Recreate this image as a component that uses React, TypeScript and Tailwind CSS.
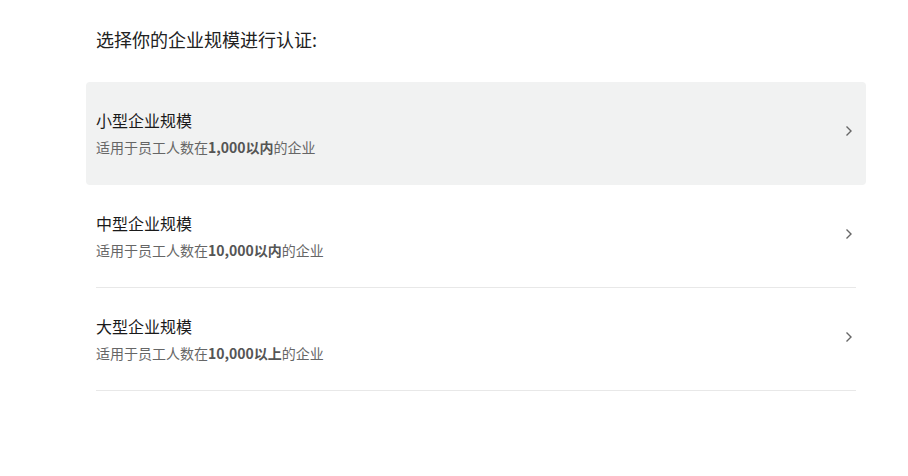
const rows = [
  { title: '小型企业规模', count: '1,000', tail: '以内', active: true },
  { title: '中型企业规模', count: '10,000', tail: '以内', active: false },
  { title: '大型企业规模', count: '10,000', tail: '以上', active: false },
]

function Chevron() {
  return (
    <svg width="8" height="12" viewBox="0 0 8 12" fill="none" className="shrink-0">
      <path d="M1.5 1.5 6 6l-4.5 4.5" stroke="#666" strokeWidth="1.4" />
    </svg>
  )
}

export default function App() {
  return (
    <div className="min-h-[476px] w-[908px] bg-white pl-[96px] pr-[52px] pt-[26px] font-['Noto_Sans_CJK_SC',sans-serif]">
      <h1 className="text-[18px] leading-[26px] text-[#222]">选择你的企业规模进行认证:</h1>

      <ul className="mt-[30px]">
        {rows.map((r) => (
          <li
            key={r.title}
            className={
              r.active
                ? '-mx-[10px] cursor-pointer rounded bg-[#f1f2f2] px-[10px]'
                : '-mx-[10px] cursor-pointer rounded px-[10px]'
            }
          >
            <div
              className={
                r.active
                  ? 'flex h-[103px] items-center justify-between border-b border-transparent pb-[1px]'
                  : 'flex h-[103px] items-center justify-between border-b border-[#e8e8e8] pb-[1px]'
              }
            >
              <div>
                <div className="text-[16px] leading-6 text-[#1a1a1a]">{r.title}</div>
                <div className="mt-[5px] text-[14px] leading-5 text-[#666]">
                  适用于员工人数在
                  <span className="font-bold text-[#555]">
                    {r.count}
                    {r.tail}
                  </span>
                  的企业
                </div>
              </div>
              <div className="mr-[3px] mt-[-3px]">
                <Chevron />
              </div>
            </div>
          </li>
        ))}
      </ul>
    </div>
  )
}
